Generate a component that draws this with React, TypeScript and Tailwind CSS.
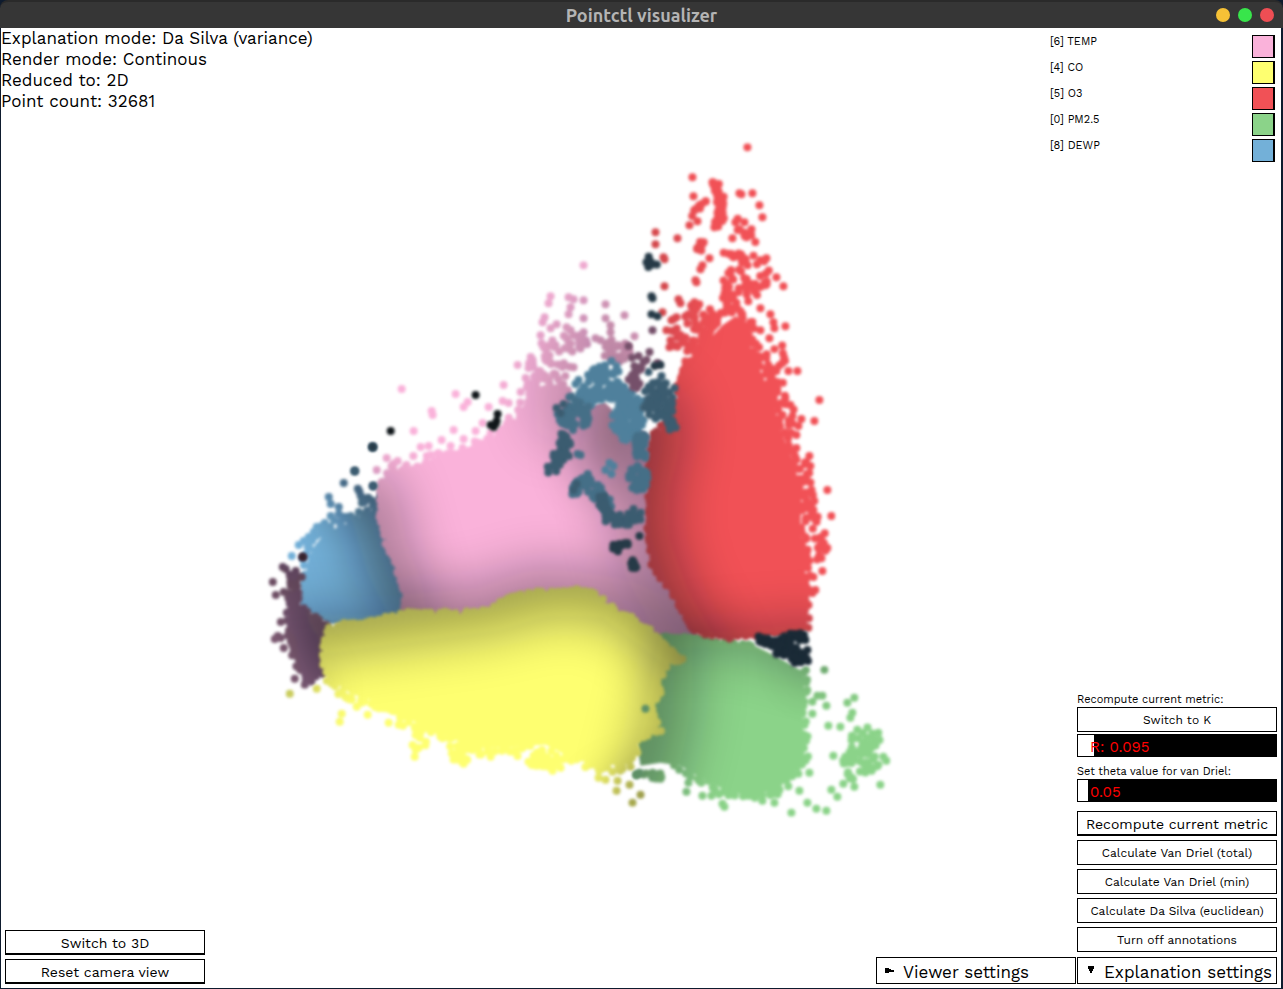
import { useId, useState } from "react";

type Pt = [number, number];

/* Small seeded generator, so that the cloud is the same on each render. */
function makeRandom(seed: number) {
  let s = seed;
  return () => {
    s = (s * 1664525 + 1013904223) % 4294967296;
    return s / 4294967296;
  };
}

/* Points strewn along a polyline, at most `spread` away from it. */
function along(line: Pt[], spacing: number, spread: number, seed: number): Pt[] {
  const rnd = makeRandom(seed);
  const out: Pt[] = [];
  for (let i = 1; i < line.length; i++) {
    const [x0, y0] = line[i - 1];
    const [x1, y1] = line[i];
    const steps = Math.max(1, Math.round(Math.hypot(x1 - x0, y1 - y0) / spacing));
    for (let k = 0; k < steps; k++) {
      const t = (k + rnd()) / steps;
      const a = rnd() * Math.PI * 2;
      const d = rnd() * spread;
      out.push([x0 + (x1 - x0) * t + Math.cos(a) * d, y0 + (y1 - y0) * t + Math.sin(a) * d]);
    }
  }
  return out;
}

/* Points strewn in an ellipse. */
function within(cx: number, cy: number, rx: number, ry: number, n: number, seed: number): Pt[] {
  const rnd = makeRandom(seed);
  return Array.from({ length: n }, (): Pt => {
    const a = rnd() * Math.PI * 2;
    const d = Math.sqrt(rnd());
    return [cx + Math.cos(a) * d * rx, cy + Math.sin(a) * d * ry];
  });
}

const pts = (p: Pt[]) => p.map(([x, y]) => `${x.toFixed(1)},${y.toFixed(1)}`).join(" ");

type Shade = { line: Pt[]; width: number; opacity: number };
type Region = { name: string; color: string; body: Pt[]; dots: Pt[]; shades: Shade[] };

const pinkYellow: Pt[] = [[327, 628], [345, 624], [380, 620], [405, 612], [430, 613], [460, 614], [490, 609], [500, 601], [515, 596], [545, 591], [580, 590], [598, 595], [605, 605], [630, 617], [650, 632], [668, 648], [678, 658]];
const pinkBlue: Pt[] = [[380, 482], [379, 510], [385, 540], [392, 555], [397, 572], [404, 592], [404, 612]];
const redLeft: Pt[] = [[676, 392], [670, 418], [652, 436], [650, 465], [649, 500], [648, 540], [652, 565], [670, 590], [680, 610], [692, 630]];
const redBottom: Pt[] = [[692, 630], [725, 637], [770, 634], [805, 630]];
const yellowRight: Pt[] = [[678, 658], [662, 668], [656, 685], [662, 694], [650, 705], [655, 722], [659, 730], [638, 740], [634, 755], [630, 764]];
const purpleYellow: Pt[] = [[327, 630], [322, 650], [325, 674]];

const regions: Region[] = [
  {
    name: "dewp-left",
    color: "#73b0d8",
    body: [[378, 490], [370, 512], [345, 524], [325, 532], [313, 547], [307, 560], [305, 580], [300, 605], [312, 616], [328, 624], [360, 625], [385, 620], [410, 612], [410, 592], [400, 570], [390, 545]],
    dots: [
      ...along([[372, 512], [345, 520], [325, 528], [312, 540], [304, 560]], 3, 6, 3),
      ...along([[304, 565], [303, 590], [301, 604]], 5, 2, 4),
      ...along([[357, 490], [364, 503], [374, 500]], 2.5, 7, 5),
      [328, 497], [330, 504], [338, 507], [330, 516], [338, 514], [344, 517], [350, 516], [298, 545], [303, 541], [307, 547], [291, 556], [343, 483], [354, 471], [372, 447], [372, 486], [316, 527], [324, 523], [313, 532], [308, 537],
    ],
    shades: [
      { line: [[372, 470], [390, 510], [405, 560], [425, 600]], width: 80, opacity: 0.5 },
      { line: [[310, 645], [350, 655], [404, 645]], width: 70, opacity: 0.4 },
      { line: [[340, 465], [392, 430]], width: 50, opacity: 0.5 },
    ],
  },
  {
    name: "violet-left",
    color: "#85607a",
    body: [[292, 572], [299, 590], [299, 604], [312, 617], [330, 625], [325, 650], [329, 672], [318, 676], [305, 681], [297, 665], [290, 645], [287, 620], [290, 600]],
    dots: [
      ...along([[290, 575], [289, 605], [289, 630], [294, 655], [304, 680]], 4, 5, 11),
      ...along([[296, 575], [299, 604], [312, 617], [327, 627]], 5, 2, 12),
      ...along([[325, 672], [312, 678], [304, 683]], 4, 3, 13),
      [282, 567], [285, 569], [295, 571], [301, 577], [272, 582], [275, 595], [283, 592], [277, 636], [274, 639], [280, 638], [283, 648], [294, 679], [304, 685], [313, 674], [280, 622], [302, 557],
    ],
    shades: [
      { line: [[312, 608], [334, 630], [340, 676]], width: 44, opacity: 0.65 },
      { line: [[280, 556], [304, 548]], width: 40, opacity: 0.7 },
    ],
  },
  {
    name: "temp",
    color: "#fab2da",
    body: [[380, 482], [388, 472], [425, 462], [460, 450], [490, 438], [512, 424], [524, 404], [540, 388], [556, 384], [566, 396], [575, 410], [604, 402], [622, 420], [650, 436], [654, 500], [652, 560], [675, 590], [698, 636], [660, 650], [500, 650], [402, 628], [402, 592], [394, 562], [383, 532]],
    dots: [
      ...along(pinkBlue, 5, 2, 21),
      ...along([[382, 475], [400, 466], [440, 458], [475, 445], [505, 430], [522, 410], [534, 392], [552, 382]], 3, 8, 22),
      ...within(547, 390, 22, 18, 60, 23),
      ...within(553, 362, 25, 17, 28, 24),
      ...within(568, 342, 20, 9, 16, 25),
      ...within(616, 350, 16, 13, 30, 26),
      [583, 265], [550, 296], [548, 303], [568, 297], [573, 299], [583, 300], [570, 307], [568, 314], [605, 304], [605, 318], [610, 325], [624, 315], [634, 336], [544, 317], [542, 322], [550, 328], [540, 335], [541, 343], [543, 347], [556, 324], [583, 318], [566, 327], [570, 330], [583, 332], [579, 338], [600, 340], [595, 338], [555, 345], [610, 332],
      [401, 389], [455, 394], [431, 411], [432, 415], [467, 402], [463, 407], [413, 431], [453, 430], [475, 431], [441, 440], [463, 439], [517, 365], [503, 385], [488, 407], [482, 423], [502, 401], [508, 403], [420, 447], [428, 446], [386, 458], [376, 470], [397, 461], [450, 446], [532, 360], [528, 368], [525, 378], [520, 392],
    ],
    shades: [
      { line: [[365, 500], [375, 550], [390, 590], [400, 650]], width: 62, opacity: 0.36 },
      { line: [[400, 655], [490, 648], [545, 628], [610, 638], [700, 676]], width: 120, opacity: 0.36 },
      { line: [[640, 420], [650, 480], [668, 560], [710, 640]], width: 90, opacity: 0.34 },
      { line: [[565, 330], [555, 420]], width: 50, opacity: 0.2 },
      { line: [[612, 300], [624, 350], [604, 460]], width: 54, opacity: 0.3 },
    ],
  },
  {
    name: "pm25",
    color: "#8bd389",
    body: [[640, 637], [675, 634], [700, 638], [755, 646], [775, 656], [803, 672], [804, 700], [802, 720], [804, 755], [790, 775], [778, 790], [745, 796], [720, 788], [700, 778], [680, 766], [660, 763], [640, 766], [636, 742], [640, 700]],
    dots: [
      ...along([[660, 637], [700, 638], [755, 646]], 5, 2, 41),
      ...along([[803, 668], [804, 690], [803, 715], [804, 758], [790, 778], [776, 794], [745, 797], [718, 791], [695, 778], [675, 768]], 4, 5, 42),
      ...within(866, 750, 18, 24, 46, 44),
      ...within(851, 769, 10, 14, 10, 45),
      ...within(655, 775, 12, 5, 12, 46),
      [824, 670], [817, 696], [822, 696], [826, 706], [812, 702], [812, 714], [828, 726], [840, 727], [847, 703], [854, 698], [850, 718], [852, 713], [857, 730], [878, 733], [875, 743], [883, 757], [886, 761], [833, 756], [845, 757], [831, 790], [837, 797], [807, 803], [816, 809], [826, 811], [791, 813], [798, 774], [799, 791], [809, 773], [880, 785], [843, 784], [686, 792], [688, 783], [702, 796], [711, 796], [722, 804], [724, 807], [762, 801], [774, 803], [854, 787], [636, 775],
    ],
    shades: [
      { line: [[655, 620], [700, 612], [760, 618], [820, 640]], width: 66, opacity: 0.32 },
      { line: [[650, 640], [650, 700], [642, 740], [628, 790]], width: 84, opacity: 0.36 },
      { line: [[815, 660], [835, 660]], width: 30, opacity: 0.3 },
    ],
  },
  {
    name: "co",
    color: "#feff70",
    body: [...pinkYellow, ...yellowRight, [600, 766], [575, 760], [545, 745], [500, 748], [465, 748], [455, 740], [430, 730], [410, 720], [390, 710], [375, 702], [350, 694], [325, 676], [322, 655]],
    dots: [
      ...along(pinkYellow, 5, 2, 31),
      ...along(yellowRight, 4, 4, 32),
      ...along(purpleYellow, 5, 2, 33),
      ...along([[326, 680], [350, 698], [378, 706], [410, 724], [435, 734], [455, 745], [485, 750], [520, 750], [545, 752], [575, 762], [600, 768], [628, 766]], 3, 7, 34),
      ...within(418, 742, 8, 9, 9, 35),
      ...within(461, 755, 11, 9, 14, 36),
      ...within(543, 760, 18, 8, 14, 37),
      [682, 659], [675, 656], [670, 660], [289, 694], [316, 689], [351, 700], [341, 714], [339, 722], [356, 707], [367, 715], [414, 757], [415, 750], [388, 723], [398, 725], [598, 778], [605, 780], [616, 791], [629, 785], [632, 803], [640, 795], [612, 772], [617, 781], [622, 769], [535, 765], [552, 771], [560, 768], [463, 764], [490, 757],
    ],
    shades: [
      { line: [[300, 608], [400, 594], [490, 582], [550, 564], [620, 570], [700, 630]], width: 98, opacity: 0.38 },
      { line: [[698, 650], [690, 690], [682, 730], [663, 800]], width: 80, opacity: 0.36 },
      { line: [[620, 818], [655, 800]], width: 40, opacity: 0.5 },
      { line: [[266, 694], [290, 694]], width: 40, opacity: 0.55 },
    ],
  },
  {
    name: "o3",
    color: "#f15156",
    body: [[678, 392], [686, 365], [696, 352], [710, 338], [722, 325], [735, 316], [750, 324], [750, 350], [762, 375], [772, 400], [780, 430], [792, 460], [801, 490], [800, 530], [805, 560], [804, 590], [807, 628], [770, 636], [725, 639], [694, 633], [680, 610], [668, 590], [650, 567], [648, 540], [649, 500], [650, 465], [652, 437], [672, 418]],
    dots: [
      ...along(redLeft, 5, 2, 51),
      ...along(redBottom, 5, 2, 52),
      ...along([[676, 392], [684, 368], [700, 346], [720, 317], [735, 305], [750, 322], [752, 350], [764, 375], [774, 400], [782, 430], [796, 460], [803, 490], [801, 530], [807, 560], [805, 590], [807, 628]], 3.5, 5, 53),
      ...along([[755, 340], [774, 375], [786, 410], [790, 430]], 3.5, 9, 54),
      ...along([[796, 455], [810, 475], [812, 530]], 4, 8, 55),
      ...along([[713, 183], [716, 193], [722, 202], [720, 218], [714, 228]], 1, 5, 56),
      ...along([[704, 241], [697, 250]], 1.2, 4, 57),
      ...along([[725, 253], [735, 255], [745, 258]], 1.3, 4, 58),
      ...along([[692, 217], [700, 204], [706, 200]], 2.5, 4, 59),
      ...along([[738, 222], [740, 235], [755, 242]], 3, 5, 60),
      ...along([[740, 265], [726, 282], [738, 297], [760, 290]], 2.8, 9, 61),
      ...along([[725, 285], [728, 310]], 1.5, 8, 62),
      ...within(688, 337, 19, 14, 28, 63),
      ...within(700, 318, 17, 16, 28, 68),
      ...within(752, 272, 18, 20, 18, 69),
      ...within(782, 357, 5, 12, 6, 66),
      ...within(819, 545, 8, 18, 14, 67),
      [747, 147], [692, 177], [693, 196], [712, 182], [739, 193], [741, 194], [752, 193], [759, 205], [762, 217], [655, 232], [655, 244], [677, 238], [663, 257], [664, 259], [664, 286], [696, 282], [700, 269], [695, 280], [709, 258], [702, 265], [689, 225], [697, 221], [735, 222], [744, 222], [751, 229], [732, 238], [760, 260], [766, 258], [776, 277], [783, 286], [765, 285], [678, 299], [680, 303], [694, 302], [662, 312], [671, 320], [666, 330], [673, 319], [676, 317], [670, 340], [669, 347], [785, 326], [770, 314], [773, 322], [774, 328], [769, 338], [774, 349], [760, 308], [776, 371], [788, 371], [797, 371], [819, 400], [814, 421], [790, 405], [801, 419], [796, 435], [809, 456], [810, 466], [827, 490], [831, 516], [806, 500], [814, 501], [815, 520], [827, 548], [822, 571], [813, 577], [815, 590], [812, 593], [812, 515], [800, 573], [796, 448], [785, 398], [792, 416], [798, 426], [760, 330],
    ],
    shades: [
      { line: [[628, 430], [614, 480], [612, 545], [638, 615], [678, 684]], width: 110, opacity: 0.42 },
      { line: [[690, 676], [740, 672], [820, 666]], width: 84, opacity: 0.34 },
      { line: [[645, 225], [650, 330]], width: 50, opacity: 0.22 },
    ],
  },
];

/* Loose points of the regions that lie between the large ones. */
const loose: { color: string; dots: Pt[] }[] = [
  {
    color: "#4f809c",
    dots: [
      ...within(603, 374, 16, 9, 30, 71),
      ...along([[578, 396], [596, 394], [612, 390], [628, 400], [640, 402]], 0.6, 11, 72),
      ...within(627, 420, 16, 21, 90, 73),
      [611, 361], [616, 366], [578, 380], [575, 384], [609, 463], [611, 474], [605, 470], [613, 466], [588, 382], [630, 392],
    ],
  },
  {
    color: "#456f87",
    dots: [
      ...within(574, 413, 17, 17, 60, 74),
      ...within(641, 447, 8, 14, 28, 75),
      ...within(638, 478, 10, 13, 40, 76),
      ...along([[572, 490], [588, 480], [600, 498], [610, 512]], 1, 8, 77),
      [577, 454], [580, 455],
    ],
  },
  {
    color: "#3b5c70",
    dots: [
      ...along([[565, 436], [562, 452], [552, 468]], 0.6, 9, 78),
      ...within(658, 400, 17, 19, 64, 79),
      ...along([[662, 415], [668, 420], [672, 430]], 1, 4, 80),
      ...along([[600, 498], [606, 515], [618, 522], [638, 514]], 1, 7, 81),
      [556, 408], [560, 413], [563, 404], [648, 372], [661, 376], [674, 388], [372, 447], [373, 486], [354, 471], [573, 490], [576, 484],
    ],
  },
  {
    color: "#75506a",
    dots: [...along([[633, 365], [636, 378], [634, 386]], 1, 8, 82), [643, 362], [649, 352], [646, 360], [636, 388], [652, 330], [628, 346], [638, 356], [657, 363]],
  },
  {
    color: "#263a47",
    dots: [
      ...along([[613, 549], [625, 543]], 0.8, 5, 83),
      ...along([[631, 561], [636, 568]], 0.9, 4, 84),
      ...along([[648, 256], [650, 266], [656, 264]], 2.4, 3, 85),
      [651, 296], [652, 298], [651, 314], [657, 316], [639, 536], [654, 366], [660, 365], [646, 262], [372, 447], [627, 543],
    ],
  },
  {
    color: "#1a2a36",
    dots: [
      ...along([[758, 641], [775, 642], [790, 638], [804, 635]], 0.9, 5, 86),
      ...along([[778, 650], [790, 650], [798, 658], [803, 661]], 0.5, 7, 87),
      [805, 640], [807, 650], [806, 658],
    ],
  },
  {
    color: "#10161a",
    dots: [[475, 395], [497, 414], [490, 425], [493, 427], [496, 421], [495, 424], [390, 431]],
  },
  { color: "#36222c", dots: [[302, 557]] },
  { color: "#5d8f66", dots: [[645, 709], [636, 775], [639, 773]] },
];

function PointCloud() {
  return (
    <svg className="absolute inset-0 h-full w-full" viewBox="0 28 1281 960" role="img" aria-label="Point cloud">
      <defs>
        <filter id="soft" x="0" y="0" width="1283" height="989" filterUnits="userSpaceOnUse" colorInterpolationFilters="sRGB">
          <feGaussianBlur stdDeviation="1.8" />
        </filter>
        <filter id="shade" x="0" y="0" width="1283" height="989" filterUnits="userSpaceOnUse">
          <feGaussianBlur stdDeviation="27" />
        </filter>
        {regions.map((r) => (
          <clipPath id={r.name} key={r.name}>
            <polygon points={pts(r.body)} />
            {r.dots.map(([x, y], i) => (
              <circle key={i} cx={x} cy={y} r="4" />
            ))}
          </clipPath>
        ))}
      </defs>
      {regions.map((r) => (
        <g key={r.name} filter="url(#soft)">
          <g clipPath={`url(#${r.name})`}>
            <rect x="250" y="120" width="660" height="720" fill={r.color} />
            {r.shades.map((s, i) => (
              <polyline
                key={i}
                points={pts(s.line)}
                fill="none"
                stroke="#080c14"
                strokeWidth={s.width}
                strokeLinecap="round"
                strokeLinejoin="round"
                opacity={s.opacity}
                filter="url(#shade)"
              />
            ))}
          </g>
        </g>
      ))}
      {loose.map((l) => (
        <g key={l.color} fill={l.color} filter="url(#soft)">
          {l.dots.map(([x, y], i) => (
            <circle key={i} cx={x} cy={y} r="4" />
          ))}
        </g>
      ))}
    </svg>
  );
}

const info = ["Explanation mode: Da Silva (variance)", "Render mode: Continous", "Reduced to: 2D", "Point count: 32681"];

const legend = [
  { label: "[6] TEMP", swatch: "bg-[#fab2da]" },
  { label: "[4] CO", swatch: "bg-[#feff70]" },
  { label: "[5] O3", swatch: "bg-[#f15156]" },
  { label: "[0] PM2.5", swatch: "bg-[#8bd389]" },
  { label: "[8] DEWP", swatch: "bg-[#73b0d8]" },
];

function Legend() {
  return (
    <ul className="flex w-[225px] flex-col gap-1 text-[11px] leading-[14px]">
      {legend.map(({ label, swatch }) => (
        <li key={label} className="flex h-[22px] items-start justify-between">
          {label}
          <span className={`h-[23px] w-[23px] border border-r-2 border-black ${swatch}`} />
        </li>
      ))}
    </ul>
  );
}

function Button({ children, large = false }: { children: string; large?: boolean }) {
  return (
    <button
      type="button"
      className={
        large
          ? "h-[25px] w-full border border-b-2 border-black bg-white pt-0.5 text-sm whitespace-nowrap"
          : "h-[25px] w-full border border-black bg-white text-xs whitespace-nowrap"
      }
    >
      {children}
    </button>
  );
}

function Slider({ label, prefix, start, max, step }: { label: string; prefix: string; start: number; max: number; step: number }) {
  const id = useId();
  const [value, setValue] = useState(start);
  return (
    <div className="relative flex h-[23px] items-center border border-black bg-black">
      <div className="h-full bg-white" style={{ width: `${(value / max) * 100}%` }} />
      <label htmlFor={id} className="absolute left-3 pt-0.5 text-[15px] leading-5 text-[#ff0000]">
        {prefix}
        {value}
      </label>
      <input
        id={id}
        type="range"
        aria-label={label}
        min={0}
        max={max}
        step={step}
        value={value}
        onChange={(e) => setValue(Number(e.target.value))}
        className="absolute inset-0 h-full w-full cursor-pointer opacity-0"
      />
    </div>
  );
}

export default function App() {
  return (
    <div className="flex min-h-screen flex-col bg-[#0e1b2e] font-['Work_Sans',Inter,sans-serif] text-black">
      <header className="grid h-7 grid-cols-[1fr_auto_1fr] items-center rounded-t-lg border-t-2 border-[#2a2a2a] bg-[#363636] px-[9px]">
        <h1 className="col-start-2 font-['Ubuntu','Noto_Sans',sans-serif] text-lg leading-6 font-bold text-[#b4b4b4]">Pointctl visualizer</h1>
        <div className="flex justify-end gap-2">
          <button type="button" aria-label="Minimize" className="h-3.5 w-3.5 rounded-full bg-[#f6c136]" />
          <button type="button" aria-label="Maximize" className="h-3.5 w-3.5 rounded-full bg-[#38e54b]" />
          <button type="button" aria-label="Close" className="h-3.5 w-3.5 rounded-full bg-[#ee4e54]" />
        </div>
      </header>
      <main className="relative mr-0.5 mb-px ml-px flex flex-1 flex-col justify-between overflow-hidden bg-white">
        <PointCloud />
        <div className="relative flex items-start justify-between pr-1.5">
          <div className="text-[17px] leading-[21px]">
            {info.map((line) => (
              <p key={line}>{line}</p>
            ))}
          </div>
          <div className="pt-[7px]">
            <Legend />
          </div>
        </div>
        <div className="relative flex items-end justify-between pr-1 pb-1 pl-1">
          <div className="flex w-[200px] flex-col gap-1">
            <Button large>Switch to 3D</Button>
            <Button large>Reset camera view</Button>
          </div>
          <div className="flex items-end gap-px">
            <button type="button" className="flex h-[27px] w-[200px] items-center gap-2 border border-black bg-white pl-2 text-[17px] whitespace-nowrap">
              <svg className="h-2.5 w-2.5" viewBox="0 0 10 10" aria-hidden="true">
                <path d="M0 2h4v1h2v1h3v2H6v0H4v1H0z" />
              </svg>
              <span className="pt-1">Viewer settings</span>
            </button>
            <div className="flex w-[200px] flex-col">
              <p className="text-[11px] leading-[15px]">Recompute current metric:</p>
              <Button>Switch to K</Button>
              <div className="pt-0.5">
                <Slider label="Recompute current metric" prefix="R: " start={0.095} max={1.15} step={0.005} />
              </div>
              <p className="pt-2 text-[11px] leading-[14px]">Set theta value for van Driel:</p>
              <Slider label="Theta value for van Driel" prefix="" start={0.05} max={1} step={0.01} />
              <div className="flex flex-col gap-1 pt-[9px] pb-[5px]">
                <Button large>Recompute current metric</Button>
                <Button>Calculate Van Driel (total)</Button>
                <Button>Calculate Van Driel (min)</Button>
                <Button>Calculate Da Silva (euclidean)</Button>
                <Button>Turn off annotations</Button>
              </div>
              <button type="button" className="flex h-[27px] items-center gap-2 border border-black bg-white pl-2 text-[17px] whitespace-nowrap">
                <svg className="h-2.5 w-2.5" viewBox="0 0 10 10" aria-hidden="true">
                  <path d="M2 0h6v3H7v2H6v2H4V5H3V3H2z" />
                </svg>
                <span className="pt-1">Explanation settings</span>
              </button>
            </div>
          </div>
        </div>
      </main>
    </div>
  );
}
